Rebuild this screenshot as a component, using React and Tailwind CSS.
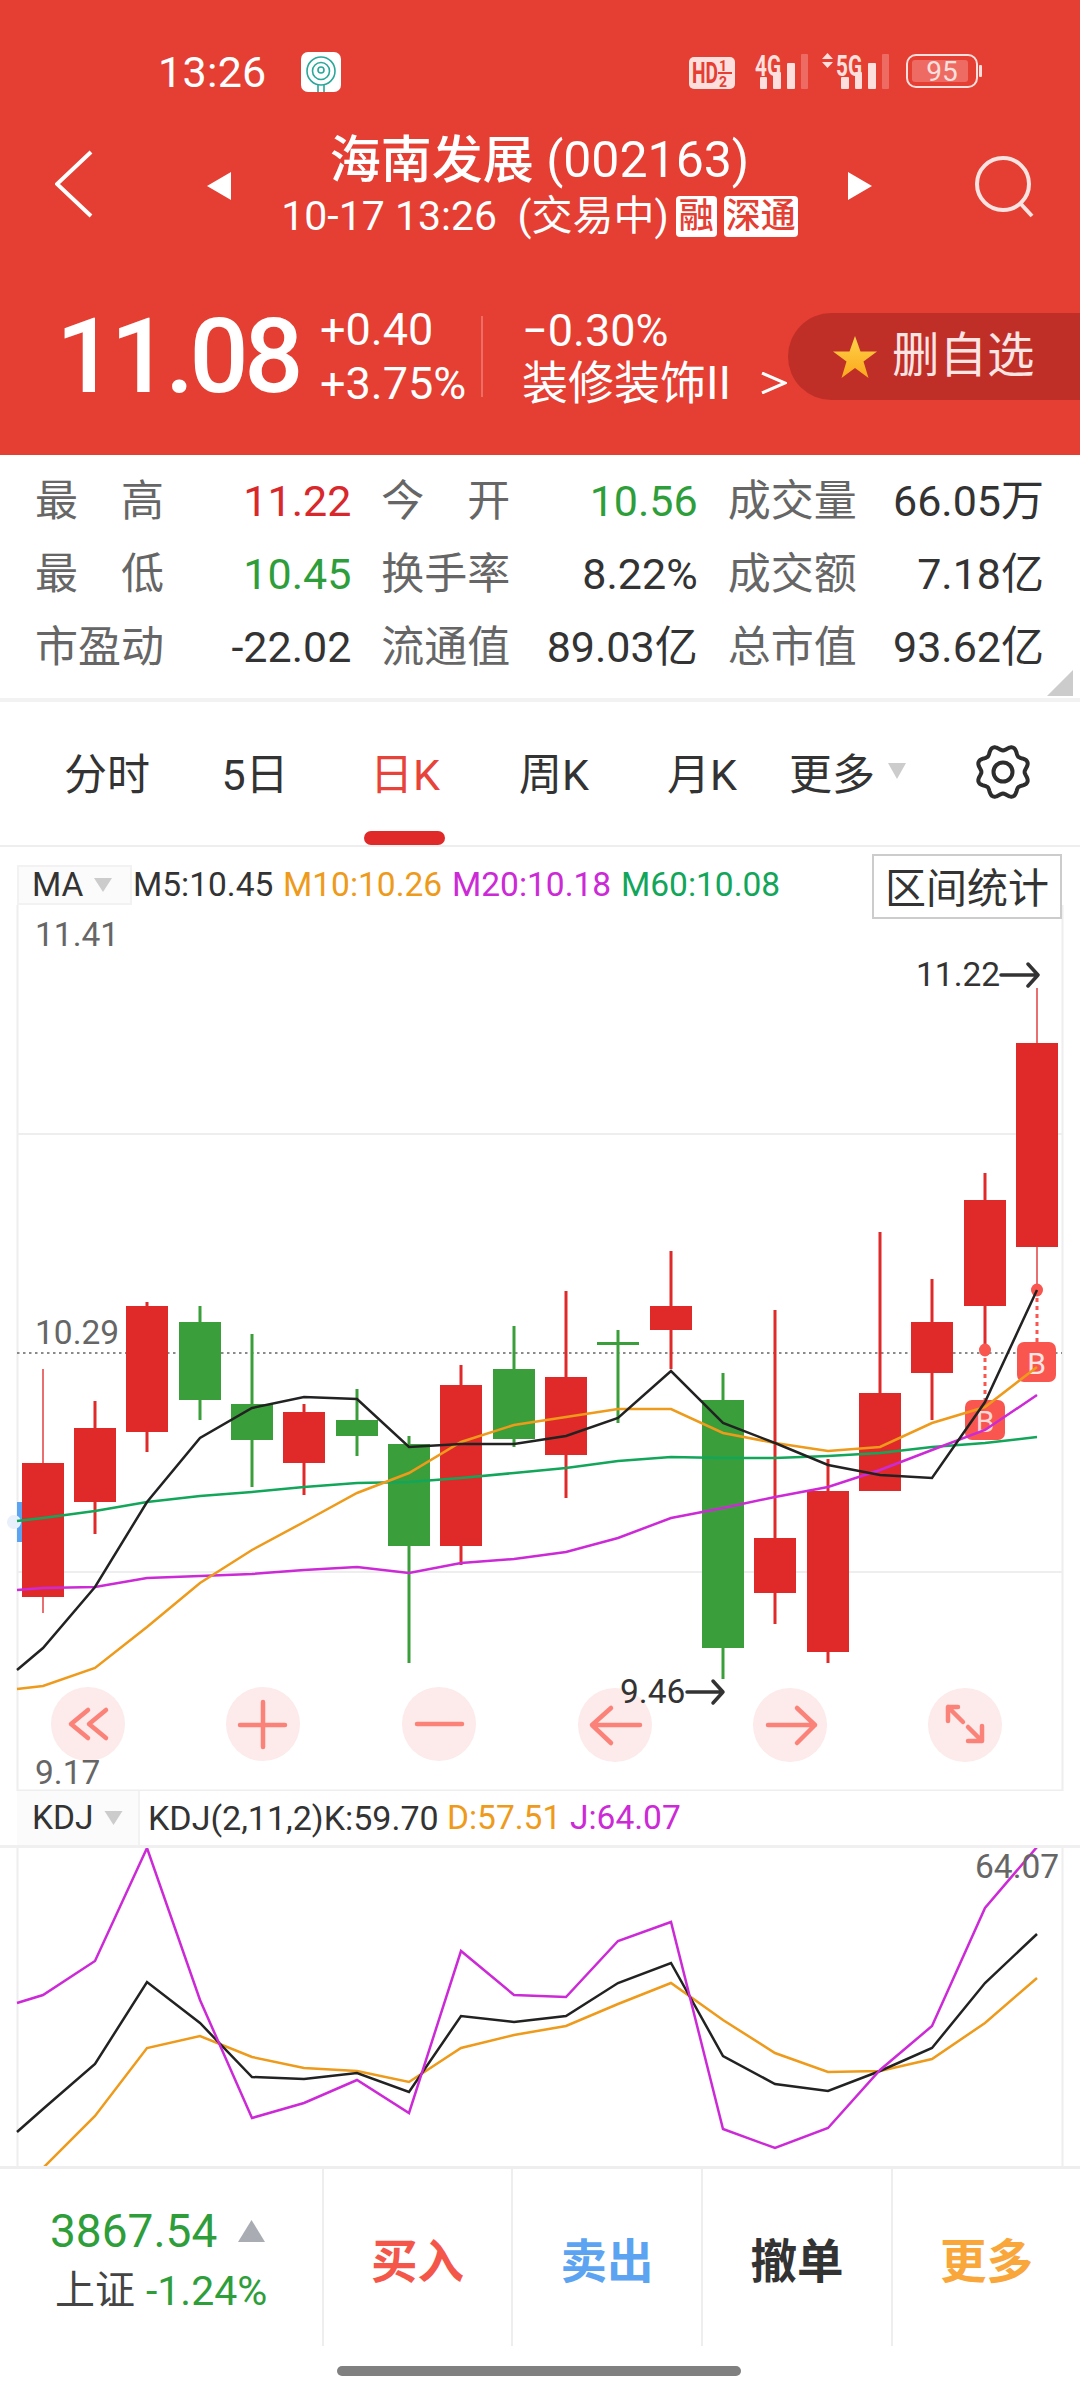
import React from "react";

const X = [43, 95, 147, 200, 252, 304, 357, 409, 461, 514, 566, 618, 671, 723, 775, 828, 880, 932, 985, 1037];
const RED = "#e02a2a";
const GREEN = "#3a9f3a";
// [wickTop, bodyTop, bodyBottom, wickBottom, colour]
const CANDLES = [
  [1369, 1463, 1597, 1613, "r"],
  [1401, 1428, 1502, 1534, "r"],
  [1302, 1306, 1432, 1452, "r"],
  [1306, 1322, 1400, 1420, "g"],
  [1334, 1404, 1440, 1487, "g"],
  [1404, 1412, 1463, 1495, "r"],
  [1389, 1420, 1436, 1456, "g"],
  [1436, 1444, 1546, 1663, "g"],
  [1365, 1385, 1546, 1565, "r"],
  [1326, 1369, 1439, 1447, "g"],
  [1291, 1377, 1455, 1498, "r"],
  [1330, 1342, 1345, 1423, "g"],
  [1251, 1306, 1330, 1369, "r"],
  [1373, 1400, 1648, 1679, "g"],
  [1310, 1538, 1593, 1624, "r"],
  [1459, 1491, 1652, 1663, "r"],
  [1232, 1393, 1491, 1491, "r"],
  [1279, 1322, 1373, 1420, "r"],
  [1173, 1200, 1306, 1350, "r"],
  [988, 1043, 1247, 1290, "r"],
];
const line = (first, ys) =>
  [`17,${first}`, ...ys.map((y, i) => `${X[i]},${y}`)].join(" ");

const MA5 = line(1670, [1648, 1587, 1502, 1438, 1408, 1397, 1399, 1447, 1444, 1444, 1436, 1418, 1371, 1423, 1443, 1465, 1475, 1478, 1402, 1290]);
const MA10 = line(1689, [1686, 1668, 1627, 1583, 1550, 1522, 1493, 1473, 1442, 1425, 1417, 1409, 1409, 1433, 1443, 1451, 1447, 1423, 1407, 1367]);
const MA20 = line(1590, [1588, 1587, 1578, 1576, 1574, 1570, 1567, 1573, 1563, 1559, 1552, 1538, 1518, 1508, 1497, 1487, 1470, 1450, 1430, 1395]);
const MA60 = line(1521, [1518, 1511, 1502, 1496, 1492, 1487, 1483, 1482, 1478, 1473, 1468, 1461, 1457, 1458, 1458, 1456, 1453, 1447, 1443, 1437]);
const KJ = line(2003, [1995, 1961, 1848, 2000, 2118, 2103, 2080, 2113, 1951, 1995, 1997, 1941, 1922, 2129, 2148, 2128, 2070, 2026, 1908, 1847]);
const KK = line(2132, [2109, 2064, 1982, 2023, 2077, 2079, 2073, 2092, 2016, 2022, 2016, 1983, 1963, 2056, 2084, 2091, 2071, 2048, 1983, 1934]);
const KD = line(2190, [2168, 2116, 2048, 2036, 2057, 2068, 2071, 2082, 2048, 2035, 2026, 2004, 1983, 2020, 2053, 2072, 2071, 2059, 2023, 1978]);

const gearPath = (() => {
  const pts = [];
  for (let i = 0; i < 144; i++) {
    const t = (i / 144) * Math.PI * 2;
    const r = 24 + 2.4 * Math.cos(8 * (t - Math.PI / 8));
    pts.push(`${(27 + r * Math.cos(t)).toFixed(2)},${(27 + r * Math.sin(t)).toFixed(2)}`);
  }
  return pts.join(" ");
})();

function StatusIcons() {
  return (
    <svg viewBox="680 50 310 44" className="w-[310px] h-[44px]">
      <rect x="689" y="57" width="46" height="32" rx="5" fill="#fde0dd" />
      <text x="692" y="83" fontSize="29" fontWeight="700" fill="#e53e33" textLength="26" lengthAdjust="spacingAndGlyphs">HD</text>
      <text x="719" y="71" fontSize="14" fontWeight="700" fill="#e53e33">1</text>
      <rect x="718" y="72" width="14" height="2" fill="#e53e33" />
      <text x="719" y="87" fontSize="14" fontWeight="700" fill="#e53e33">2</text>

      <text x="755" y="76" fontSize="30" fontWeight="700" fill="#fde0dd" textLength="26" lengthAdjust="spacingAndGlyphs">4G</text>
      <rect x="760" y="77" width="7" height="12" rx="1" fill="#fde0dd" />
      <rect x="773" y="72" width="8" height="17" rx="1" fill="#fde0dd" />
      <rect x="787" y="63" width="8" height="26" rx="1" fill="#fde0dd" />
      <rect x="801" y="54" width="7" height="35" rx="1" fill="#ee6b63" />

      <polygon points="822,59 833,59 827.5,53" fill="#fde0dd" />
      <polygon points="822,62 833,62 827.5,68" fill="#fde0dd" />
      <text x="836" y="76" fontSize="30" fontWeight="700" fill="#fde0dd" textLength="26" lengthAdjust="spacingAndGlyphs">5G</text>
      <rect x="841" y="77" width="8" height="12" rx="1" fill="#fde0dd" />
      <rect x="855" y="72" width="7" height="17" rx="1" fill="#fde0dd" />
      <rect x="868" y="63" width="8" height="26" rx="1" fill="#fde0dd" />
      <rect x="882" y="54" width="7" height="35" rx="1" fill="#ee6b63" />

      <rect x="907" y="55" width="70" height="32" rx="9" fill="none" stroke="#fde0dd" strokeWidth="2" />
      <rect x="912" y="60" width="56" height="22" rx="3" fill="#ee6b63" />
      <rect x="979" y="65" width="3" height="12" rx="1" fill="#fde0dd" />
      <text x="942" y="81" fontSize="28" fill="#fde0dd" textAnchor="middle">95</text>
    </svg>
  );
}

function AppIcon() {
  return (
    <svg viewBox="0 0 40 40" className="w-[40px] h-[40px] ml-[34px]">
      <rect width="40" height="40" rx="7" fill="#fff" />
      <circle cx="20" cy="19" r="14" fill="none" stroke="#2aa79b" strokeWidth="1.6" />
      <circle cx="20" cy="19" r="8.5" fill="none" stroke="#2aa79b" strokeWidth="1.6" />
      <circle cx="20" cy="18" r="3" fill="none" stroke="#2aa79b" strokeWidth="1.6" />
      <path d="M17 33 V40 M23 33 V40" stroke="#2aa79b" strokeWidth="1.6" />
    </svg>
  );
}

const LABEL = "text-[#666] text-[43px] leading-none w-[129px] shrink-0 flex justify-between whitespace-nowrap";
function Stat({ a, b, value, color = "text-[#333]" }) {
  return (
    <div className="flex items-center justify-between">
      <div className={LABEL}>
        {b ? (<><span>{a}</span><span>{b}</span></>) : <span>{a}</span>}
      </div>
      <div className={`text-[43px] leading-none whitespace-nowrap ${color}`}>{value}</div>
    </div>
  );
}

function PriceChart() {
  return (
    <svg viewBox="0 905 1080 886" className="block w-[1080px] h-[886px]">
      <path d="M17.5 905 V1791 M1062.5 905 V1791" stroke="#eeeeee" strokeWidth="2" />
      <path d="M17 1134 H1062 M17 1572 H1062 M17 1790.5 H1062" stroke="#eeeeee" strokeWidth="2" />
      <line x1="17" y1="1353" x2="1062" y2="1353" stroke="#8a8a8a" strokeWidth="2" strokeDasharray="2.5 3.5" />
      <path d="M17 1502 h8 v40 h-8 z" fill="#5ca4f2" />
      <circle cx="14" cy="1522" r="7" fill="#e8f0fb" />
      {CANDLES.map(([wt, bt, bb, wb, c], i) => {
        const fill = c === "r" ? RED : GREEN;
        const thin = i === 0 || i === 19;
        return (
          <g key={i} fill={fill}>
            <rect x={X[i] - (thin ? 1 : 1.5)} y={wt} width={thin ? 2 : 3} height={wb - wt} fill={thin ? "#e87070" : fill} />
            <rect x={X[i] - 21} y={bt} width="42" height={bb - bt} />
          </g>
        );
      })}
      <line x1="985" y1="1350" x2="985" y2="1400" stroke="#f95650" strokeWidth="3" strokeDasharray="4 4" />
      <line x1="1037" y1="1290" x2="1037" y2="1342" stroke="#f95650" strokeWidth="3" strokeDasharray="4 4" />
      <ellipse cx="985" cy="1350" rx="6" ry="6.5" fill="#f95650" />
      <ellipse cx="1037" cy="1290" rx="6" ry="6.5" fill="#f95650" />
      <rect x="965" y="1400" width="40" height="40" rx="7" fill="#f95650" />
      <text x="985" y="1432" fontSize="30" fill="#ffd9d6" textAnchor="middle">B</text>
      <rect x="1017" y="1342" width="39" height="40" rx="7" fill="#f95650" />
      <text x="1036.5" y="1374" fontSize="30" fill="#ffe5e3" textAnchor="middle">B</text>
      <polyline points={MA60} fill="none" stroke="#12a65a" strokeWidth="2.5" />
      <polyline points={MA20} fill="none" stroke="#cc2ad6" strokeWidth="2.5" />
      <polyline points={MA10} fill="none" stroke="#ee9a1b" strokeWidth="2.5" />
      <polyline points={MA5} fill="none" stroke="#222222" strokeWidth="2.5" />
      <g fill="#fdeaea">
        <circle cx="88" cy="1724" r="37" />
        <circle cx="263" cy="1724" r="37" />
        <circle cx="439" cy="1724" r="37" />
        <circle cx="615" cy="1725" r="37" />
        <circle cx="790" cy="1725" r="37" />
        <circle cx="965" cy="1725" r="37" />
      </g>
      <g fill="none" stroke="#fb8278" strokeWidth="4.5" strokeLinecap="round" strokeLinejoin="round">
        <path d="M88 1710 L71 1724 L88 1738 M106 1710 L89 1724 L106 1738" />
        <path d="M263 1702 V1747 M240 1725 H285" />
        <path d="M417 1724 H462" />
        <path d="M640 1725 H592 M611 1708 L592 1725 L611 1743" />
        <path d="M768 1725 H815 M797 1708 L815 1725 L797 1743" />
        <path d="M948 1721 V1707 H958 M948 1707 L963 1722 M982 1726 V1741 H968 M982 1741 L968 1727" />
      </g>
      <g fill="none" stroke="#333333" strokeWidth="3.5" strokeLinecap="round" strokeLinejoin="round">
        <path d="M1001 975 H1038 M1028 964 L1038 975 L1028 986" />
        <path d="M687 1692 H723 M713 1681 L723 1692 L713 1703" />
      </g>
    </svg>
  );
}

function KdjChart() {
  return (
    <svg viewBox="0 1848 1080 318" className="block w-[1080px] h-[318px]">
      <path d="M17.5 1848 V2166 M1062.5 1848 V2166" stroke="#eeeeee" strokeWidth="2" />
      <polyline points={KD} fill="none" stroke="#ee9a1b" strokeWidth="2.5" />
      <polyline points={KK} fill="none" stroke="#222222" strokeWidth="2.5" />
      <polyline points={KJ} fill="none" stroke="#cc2ad6" strokeWidth="2.5" />
    </svg>
  );
}

const TABW = [
  ["分时", "w-[146px]", "text-[#333]"],
  ["5日", "w-[150px]", "text-[#333]"],
  ["日K", "w-[150px]", "text-[#e8433a]"],
  ["周K", "w-[148px]", "text-[#333]"],
  ["月K", "w-[148px]", "text-[#333]"],
];

export default function App() {
  return (
    <div className="w-[1080px] h-[2400px] bg-white overflow-hidden font-['Roboto','Noto_Sans_CJK_SC',sans-serif]">
      {/* Red header */}
      <header className="h-[455px] bg-[#e53e33] text-white flex flex-col">
        <div className="mt-[50px] h-[44px] flex items-center pl-[158px] pr-[90px]">
          <span className="text-[43px] leading-none tracking-[0.3px]">13:26</span>
          <AppIcon />
          <div className="ml-auto"><StatusIcons /></div>
        </div>
        <div className="mt-[36px] h-[113px] flex items-center pl-[55px]">
          <svg viewBox="0 0 38 68" className="w-[38px] h-[68px] shrink-0 mb-[6px]">
            <path d="M36 2 L2 34 L36 66" fill="none" stroke="#fff" strokeWidth="4" />
          </svg>
          <svg viewBox="0 0 24 28" className="w-[24px] h-[28px] ml-[114px] shrink-0 mb-[2px]">
            <polygon points="24,0 24,28 0,14" fill="#fff" />
          </svg>
          <div className="w-[617px] flex flex-col items-center shrink-0">
            <div className="h-[60px] flex items-center text-[51px] leading-none whitespace-pre">
              <span className="font-medium">海南发展</span><span className="text-[50px]"> (002163)</span>
            </div>
            <div className="h-[53px] flex items-center text-[41px] leading-none whitespace-pre">
              <span>10-17 13:26  (交易中)</span>
              <span className="ml-[7px] h-[41px] w-[41px] rounded-[4px] bg-white text-[#e53e33] text-[35px] font-medium flex items-center justify-center">融</span>
              <span className="ml-[7px] h-[41px] w-[74px] rounded-[4px] bg-white text-[#e53e33] text-[35px] font-medium flex items-center justify-center">深通</span>
            </div>
          </div>
          <svg viewBox="0 0 24 28" className="w-[24px] h-[28px] shrink-0 mb-[2px]">
            <polygon points="0,0 0,28 24,14" fill="#fff" />
          </svg>
          <svg viewBox="0 0 60 62" className="w-[60px] h-[62px] ml-[103px] shrink-0">
            <circle cx="28" cy="28" r="26" fill="none" stroke="#f7e3e1" strokeWidth="4" />
            <path d="M45 47 L57 60" stroke="#f7e3e1" strokeWidth="4" />
          </svg>
        </div>
        <div className="mt-[70px] h-[87px] flex items-center">
          <span className="ml-[56px] w-[264px] shrink-0 text-[104px] leading-none font-medium tracking-[-4.5px]">11.08</span>
          <div className="w-[160px] shrink-0 flex flex-col gap-[16px] text-[45px] leading-[38px]">
            <span>+0.40</span>
            <span>+3.75%</span>
          </div>
          <div className="ml-[1px] w-[2px] h-[81px] bg-[#ec6e65] shrink-0" />
          <div className="ml-[39px] w-[266px] shrink-0 flex flex-col gap-[14px] text-[45px] leading-[38px]">
            <span>−0.30%</span>
            <span className="flex items-center whitespace-nowrap text-[46px]">
              装修装饰II
              <svg viewBox="0 0 26 22" className="ml-[30px] w-[26px] h-[22px] shrink-0">
                <path d="M1 1 L24 11 L1 21" fill="none" stroke="#fff" strokeWidth="3" />
              </svg>
            </span>
          </div>
          <div className="flex-1 h-[87px] bg-[#bf2f28] rounded-l-[44px] flex items-center pl-[45px]">
            <svg viewBox="0 0 44 42" className="w-[44px] h-[42px] shrink-0">
              <defs>
                <linearGradient id="star" x1="0" y1="0" x2="0" y2="1">
                  <stop offset="0" stopColor="#ffd24a" />
                  <stop offset="1" stopColor="#fba81c" />
                </linearGradient>
              </defs>
              <polygon points="22,0 27.5,15.5 44,15.5 30.5,25.5 35.5,42 22,32 8.5,42 13.5,25.5 0,15.5 16.5,15.5" fill="url(#star)" />
            </svg>
            <span className="ml-[15px] text-[47.5px] leading-none whitespace-nowrap text-[#fbe4e2]">删自选</span>
          </div>
        </div>
      </header>

      {/* Quote table */}
      <section className="relative h-[243px] pt-[10px]">
        <div className="grid grid-cols-3 gap-x-[30px] px-[35px] auto-rows-[73px] w-[1079px]">
          <Stat a="最" b="高" value="11.22" color="text-[#d8282b]" />
          <Stat a="今" b="开" value="10.56" color="text-[#2e9e3b]" />
          <Stat a="成交量" value="66.05万" />
          <Stat a="最" b="低" value="10.45" color="text-[#2e9e3b]" />
          <Stat a="换手率" value="8.22%" />
          <Stat a="成交额" value="7.18亿" />
          <Stat a="市盈动" value="-22.02" />
          <Stat a="流通值" value="89.03亿" />
          <Stat a="总市值" value="93.62亿" />
        </div>
        <svg viewBox="0 0 26 26" className="absolute right-[7px] top-[215px] w-[26px] h-[26px]">
          <polygon points="26,0 26,26 0,26" fill="#cccccc" />
        </svg>
      </section>
      <div className="h-[4px] bg-[#f2f2f2]" />

      {/* Period tabs */}
      <nav className="relative h-[143px] flex items-center pl-[34px] pt-[3px]">
        {TABW.map(([t, w, c]) => (
          <span key={t} className={`${w} shrink-0 text-center text-[43px] leading-none ${c}`}>{t}</span>
        ))}
        <span className="ml-[13px] text-[43px] leading-none text-[#333] whitespace-nowrap">更多</span>
        <svg viewBox="0 0 18 16" className="ml-[13px] w-[18px] h-[16px] mb-[8px] shrink-0">
          <polygon points="0,0 18,0 9,16" fill="#cccccc" />
        </svg>
        <svg viewBox="0 0 54 54" className="ml-[70px] w-[54px] h-[54px] shrink-0 mb-[6px]">
          <polygon points={gearPath} fill="none" stroke="#2d2d2d" strokeWidth="4" strokeLinejoin="round" />
          <circle cx="27" cy="27" r="9.5" fill="none" stroke="#2d2d2d" strokeWidth="4" />
        </svg>
        <div className="absolute left-[364px] bottom-0 w-[81px] h-[14px] rounded-full bg-[#e02a2a]" />
      </nav>
      <div className="h-[2px] bg-[#eeeeee]" />

      {/* MA legend */}
      <div className="relative z-10 h-[58px] flex items-start pl-[17px] pt-[18px]">
        <div className="w-[115px] h-[40px] shrink-0 border-2 border-[#f2f2f2] bg-[#fbfbfb] flex items-center pl-[13px]">
          <span className="text-[33.5px] leading-none text-[#333]">MA</span>
          <svg viewBox="0 0 18 14" className="ml-[11px] w-[18px] h-[14px] shrink-0"><polygon points="0,0 18,0 9,14" fill="#cccccc" /></svg>
        </div>
        <div className="ml-[1px] h-[40px] flex items-center text-[33.5px] leading-none whitespace-nowrap">
          <span className="text-[#333] w-[150px]">M5:10.45</span>
          <span className="text-[#ee9a1b] w-[169px]">M10:10.26</span>
          <span className="text-[#cc2ad6] w-[169px]">M20:10.18</span>
          <span className="text-[#12a65a]">M60:10.08</span>
        </div>
        <div className="ml-auto mr-[18px] -mt-[11px] w-[190px] h-[65px] shrink-0 border-2 border-[#cccccc] bg-white flex items-center justify-center pt-[6px] text-[41px] leading-none text-[#333]">
          区间统计
        </div>
      </div>

      {/* Price chart */}
      <div className="relative text-[33.5px] leading-none whitespace-nowrap">
        <PriceChart />
        <span className="absolute left-[35px] top-[13px] text-[#666]">11.41</span>
        <span className="absolute left-[35px] top-[411px] text-[#666]">10.29</span>
        <span className="absolute left-[35px] top-[851px] text-[#666]">9.17</span>
        <span className="absolute left-[916px] top-[53px] text-[#333]">11.22</span>
        <span className="absolute left-[620px] top-[770px] text-[#333]">9.46</span>
      </div>

      {/* KDJ legend */}
      <div className="h-[57px] flex items-start pl-[17px] border-b-[3px] border-[#f0f0f0]">
        <div className="w-[123px] h-[54px] shrink-0 border-r-2 border-[#f2f2f2] bg-[#fbfbfb] flex items-center pl-[15px]">
          <span className="text-[33.5px] leading-none text-[#333]">KDJ</span>
          <svg viewBox="0 0 18 14" className="ml-[10px] w-[19px] h-[14px] shrink-0"><polygon points="0,0 18,0 9,14" fill="#cccccc" /></svg>
        </div>
        <div className="ml-[8px] h-[54px] flex items-center text-[33.5px] leading-none whitespace-nowrap">
          <span className="text-[#333] w-[299px] text-[34px]">KDJ(2,11,2)K:59.70</span>
          <span className="text-[#ee9a1b] w-[123px]">D:57.51</span>
          <span className="text-[#cc2ad6]">J:64.07</span>
        </div>
      </div>

      {/* KDJ chart */}
      <div className="relative text-[33.5px] leading-none">
        <KdjChart />
        <span className="absolute left-[975px] top-[2px] text-[#666]">64.07</span>
      </div>
      <div className="h-[3px] bg-[#eeeeee]" />

      {/* Bottom bar */}
      <div className="h-[177px] flex">
        <div className="w-[322px] shrink-0 flex flex-col pl-[50px] pt-[44px]">
          <div className="flex items-center h-[36px]">
            <span className="text-[46px] leading-none text-[#2e9e3b] whitespace-nowrap">3867.54</span>
            <svg viewBox="0 0 27 22" className="ml-[21px] w-[27px] h-[22px] shrink-0"><polygon points="13.5,0 27,22 0,22" fill="#a9adb3" /></svg>
          </div>
          <div className="mt-[22px] h-[40px] pl-[5px] flex items-center whitespace-nowrap text-[40px] leading-none">
            <span className="text-[#444]">上证</span>
            <span className="ml-[11px] text-[#2e9e3b] text-[41px]">-1.24%</span>
          </div>
        </div>
        {[
          ["买入", "text-[#f5564a]", "w-[189px]"],
          ["卖出", "text-[#5ca4f2]", "w-[190px]"],
          ["撤单", "text-[#333]", "w-[190px]"],
          ["更多", "text-[#f9a63a]", "flex-1"],
        ].map(([t, c, w]) => (
          <div key={t} className={`${w} border-l-2 border-[#eeeeee] flex items-center justify-center pt-[10px] text-[46.5px] leading-none font-bold ${c}`}>
            {t}
          </div>
        ))}
      </div>

      {/* Home indicator */}
      <div className="mt-[20px] ml-[337px] w-[404px] h-[10px] rounded-full bg-[#808080]" />
    </div>
  );
}
